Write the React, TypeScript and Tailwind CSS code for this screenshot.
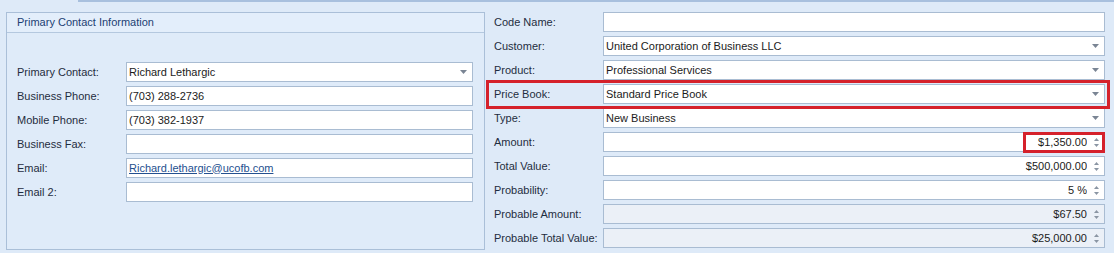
import React from 'react';

const font = { fontFamily: '"Liberation Sans", Arial, sans-serif' };

function DropArrow() {
  return (
    <svg width="7" height="4" viewBox="0 0 7 4" className="shrink-0">
      <path d="M0 0h7L3.5 4z" fill="#7a8594" />
    </svg>
  );
}

function Spin() {
  return (
    <div className="flex flex-col gap-[3px] shrink-0">
      <svg width="5" height="3" viewBox="0 0 5 3"><path d="M0 3h5L2.5 0z" fill="#8a95a3" /></svg>
      <svg width="5" height="3" viewBox="0 0 5 3"><path d="M0 0h5L2.5 3z" fill="#8a95a3" /></svg>
    </div>
  );
}

type FieldKind = 'text' | 'combo' | 'spin' | 'link';

function Field({ value = '', kind = 'text', disabled = false }: { value?: string; kind?: FieldKind; disabled?: boolean }) {
  const bg = disabled ? 'bg-[#ebf0f7]' : 'bg-white';
  return (
    <div className={`flex-1 h-[20px] border border-[#a9bcd2] ${bg} flex items-center pl-[2px] pr-[5px] gap-[7px]`}>
      <span
        className={`flex-1 truncate text-[11px] leading-none ${kind === 'spin' ? 'text-right' : ''} ${
          kind === 'link' ? 'text-[#24508f] underline' : 'text-[#1b1b1b]'
        }`}
      >
        {value}
      </span>
      {kind === 'combo' && <DropArrow />}
      {kind === 'spin' && <Spin />}
    </div>
  );
}

function Row({ label, ...rest }: { label: string } & React.ComponentProps<typeof Field>) {
  return (
    <div className="flex items-center h-[20px]">
      <span className="w-[109px] shrink-0 whitespace-nowrap text-[11px] text-[#1f2d40]">{label}</span>
      <Field {...rest} />
    </div>
  );
}

export default function App() {
  return (
    <div className="relative w-[1114px] h-[253px] overflow-hidden bg-[#deeaf8]" style={font}>
      <div className="ml-[78px] h-[2px] bg-[#a8c0de]" />

      <div className="flex mt-[10px]">
        {/* Primary contact group */}
        <div className="ml-[6px] w-[479px] h-[238px] border border-[#aabfd8] bg-[#dfebf9]">
          <div className="h-[20px] flex items-center pl-[10px] border-b border-[#b4c8df] bg-[#e3eefb] text-[11px] text-[#1c3f73]">
            Primary Contact Information
          </div>
          <div className="flex flex-col gap-[4px] mt-[29px] pl-[10px] pr-[11px]">
            <Row label="Primary Contact:" value="Richard Lethargic" kind="combo" />
            <Row label="Business Phone:" value="(703) 288-2736" />
            <Row label="Mobile Phone:" value="(703) 382-1937" />
            <Row label="Business Fax:" />
            <Row label="Email:" value="Richard.lethargic@ucofb.com" kind="link" />
            <Row label="Email 2:" />
          </div>
        </div>

        {/* Opportunity fields */}
        <div className="ml-[9px] w-[611px] flex flex-col gap-[4px]">
          <Row label="Code Name:" />
          <Row label="Customer:" value="United Corporation of Business LLC" kind="combo" />
          <Row label="Product:" value="Professional Services" kind="combo" />
          <Row label="Price Book:" value="Standard Price Book" kind="combo" />
          <Row label="Type:" value="New Business" kind="combo" />
          <Row label="Amount:" value="$1,350.00" kind="spin" />
          <Row label="Total Value:" value="$500,000.00" kind="spin" />
          <Row label="Probability:" value="5 %" kind="spin" />
          <Row label="Probable Amount:" value="$67.50" kind="spin" disabled />
          <Row label="Probable Total Value:" value="$25,000.00" kind="spin" disabled />
        </div>
      </div>

      {/* highlight marks */}
      <div className="absolute left-[486px] top-[80px] w-[624px] h-[29px] border-[3px] border-[#d5212b]" />
      <div className="absolute left-[1023px] top-[132px] w-[82px] h-[21px] border-[3px] border-[#d5212b]" />
    </div>
  );
}
